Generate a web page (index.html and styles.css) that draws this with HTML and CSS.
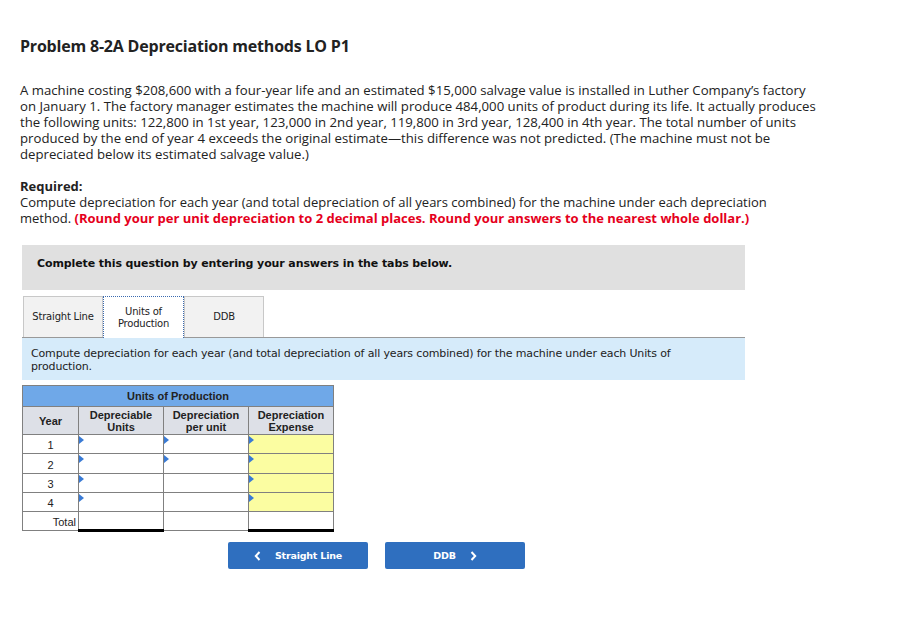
FILE: index.html
```html
<!DOCTYPE html>
<html>
<head>
<meta charset="utf-8">
<link rel="stylesheet" href="styles.css">
</head>
<body>
<div class="page">
  <h1 class="title">Problem 8-2A Depreciation methods LO P1</h1>
  <p class="para">A machine costing $208,600 with a four-year life and an estimated $15,000 salvage value is installed in Luther Company’s factory on January 1. The factory manager estimates the machine will produce 484,000 units of product during its life. It actually produces the following units: 122,800 in 1st year, 123,000 in 2nd year, 119,800 in 3rd year, 128,400 in 4th year. The total number of units produced by the end of year 4 exceeds the original estimate—this difference was not predicted. (The machine must not be depreciated below its estimated salvage value.)</p>
  <div class="reqhead">Required:</div>
  <p class="req">Compute depreciation for each year (and total depreciation of all years combined) for the machine under each depreciation method. <span class="red">(Round your per unit depreciation to 2 decimal places. Round your answers to the nearest whole dollar.)</span></p>

  <div class="panel">
    <div class="banner">Complete this question by entering your answers in the tabs below.</div>
    <div class="tabs">
      <div class="tab">Straight Line</div>
      <div class="tab active">Units of<br>Production</div>
      <div class="tab">DDB</div>
    </div>
    <div class="instr">Compute depreciation for each year (and total depreciation of all years combined) for the machine under each Units of production.</div>

    <table class="grid">
      <tr><th colspan="4" class="cap">Units of Production</th></tr>
      <tr class="hdr"><th class="c1">Year</th><th class="c2">Depreciable<br>Units</th><th class="c3">Depreciation<br>per unit</th><th class="c4">Depreciation<br>Expense</th></tr>
      <tr><td class="yr">1</td><td><span class="tri"></span></td><td><span class="tri"></span></td><td class="yel"><span class="tri"></span></td></tr>
      <tr><td class="yr">2</td><td><span class="tri"></span></td><td><span class="tri"></span></td><td class="yel"><span class="tri"></span></td></tr>
      <tr><td class="yr">3</td><td><span class="tri"></span></td><td></td><td class="yel"><span class="tri"></span></td></tr>
      <tr><td class="yr">4</td><td><span class="tri"></span></td><td></td><td class="yel"><span class="tri"></span></td></tr>
      <tr class="tot"><td class="yr right">Total</td><td class="sum"></td><td></td><td class="sum"></td></tr>
    </table>

    <div class="nav">
      <div class="btn"><svg class="chev" width="7" height="10" viewBox="0 0 7 10"><path d="M5.5 1 L1.8 5 L5.5 9" fill="none" stroke="#fff" stroke-width="2"/></svg><span>Straight Line</span></div>
      <div class="btn"><span>DDB</span><svg class="chev" width="7" height="10" viewBox="0 0 7 10"><path d="M1.5 1 L5.2 5 L1.5 9" fill="none" stroke="#fff" stroke-width="2"/></svg></div>
    </div>
  </div>
</div>
</body>
</html>
```

FILE: styles.css
```css
html, body { margin: 0; padding: 0; background: #fff; }
.page {
  padding: 35px 20px 0 20px;
  font-family: "Open Sans", "Liberation Sans", sans-serif;
  color: #222;
}
.title {
  margin: 0;
  font-size: 16px;
  font-weight: 700;
  line-height: 22px;
  letter-spacing: -0.2px;
}
.para {
  margin: 25px 0 0 0;
  font-size: 13.2px;
  line-height: 16px;
  width: 803px;
}
.reqhead {
  margin-top: 16px;
  font-size: 13px;
  font-weight: 700;
  line-height: 16px;
}
.req {
  margin: 0;
  font-size: 13px;
  line-height: 16px;
  width: 790px;
}
.red { color: #e5001c; font-weight: 700; }
.panel { margin: 19px 0 0 2px; width: 723px; }
.banner {
  background: #e0e0e0;
  height: 45px;
  box-sizing: border-box;
  padding: 12px 0 0 15px;
  font-family: "DejaVu Sans", Verdana, sans-serif;
  font-size: 11px;
  font-weight: 700;
  color: #111;
  letter-spacing: -0.1px;
}
.tabs {
  display: flex;
  margin-top: 6px;
  padding-left: 1px;
  height: 41px;
  border-bottom: 1px solid #999;
}
.tab {
  width: 80px;
  box-sizing: border-box;
  border: 1px solid #c8c8c8;
  border-bottom: none;
  background: #f2f2f2;
  display: flex;
  align-items: center;
  justify-content: center;
  text-align: center;
  font-family: "DejaVu Sans", Verdana, sans-serif;
  font-size: 10px;
  line-height: 12px;
  color: #222;
  letter-spacing: -0.2px;
}
.tab.active {
  background: #fff;
  border: 1px dotted #3a6ab0;
  border-bottom: none;
  margin-bottom: -1px;
  height: 42px;
  width: 81px;
}
.instr {
  background: #d6ebfa;
  height: 42px;
  box-sizing: border-box;
  padding: 9px 40px 0 9px;
  font-family: "DejaVu Sans", Verdana, sans-serif;
  font-size: 11px;
  line-height: 13px;
  color: #222;
  letter-spacing: -0.15px;
}
.grid {
  margin-top: 5px;
  border-collapse: collapse;
  font-family: "Liberation Sans", Arial, sans-serif;
  font-size: 11px;
  color: #222;
}
.grid th, .grid td {
  border: 1px solid #808080;
  padding: 0;
}
.cap {
  background: #6fa8e8;
  height: 20px;
  font-weight: 700;
  font-size: 11px;
}
.hdr th {
  background: #dde0e7;
  height: 27px;
  font-weight: 700;
  line-height: 12px;
  vertical-align: middle;
}
.c1 { width: 55px; }
.c2, .c3, .c4 { width: 84px; }
.grid td { height: 19.3px; line-height: 18px; position: relative; box-sizing: border-box; }
.yr { text-align: center; font-size: 11px; vertical-align: bottom; line-height: 16px !important; }
.right { text-align: right; padding-right: 2px !important; }
.yel { background: #fbfda1; }
.tri {
  position: absolute;
  left: 0;
  top: 1px;
  width: 0;
  height: 0;
  border-top: 4px solid transparent;
  border-bottom: 4px solid transparent;
  border-left: 5px solid #3a7bd5;
}
.tot td.sum { border-top: 1px solid #000; border-bottom: 3px solid #000; }
.nav {
  display: flex;
  gap: 17px;
  margin: 10px 0 0 206px;
}
.btn {
  width: 140px;
  height: 27px;
  background: #2f6fbf;
  border-radius: 2px;
  color: #fff;
  display: flex;
  align-items: center;
  justify-content: center;
  gap: 14px;
  font-family: "DejaVu Sans", Verdana, sans-serif;
  font-size: 9.5px;
  font-weight: 700;
  letter-spacing: -0.2px;
}
.chev { display: block; }
```
